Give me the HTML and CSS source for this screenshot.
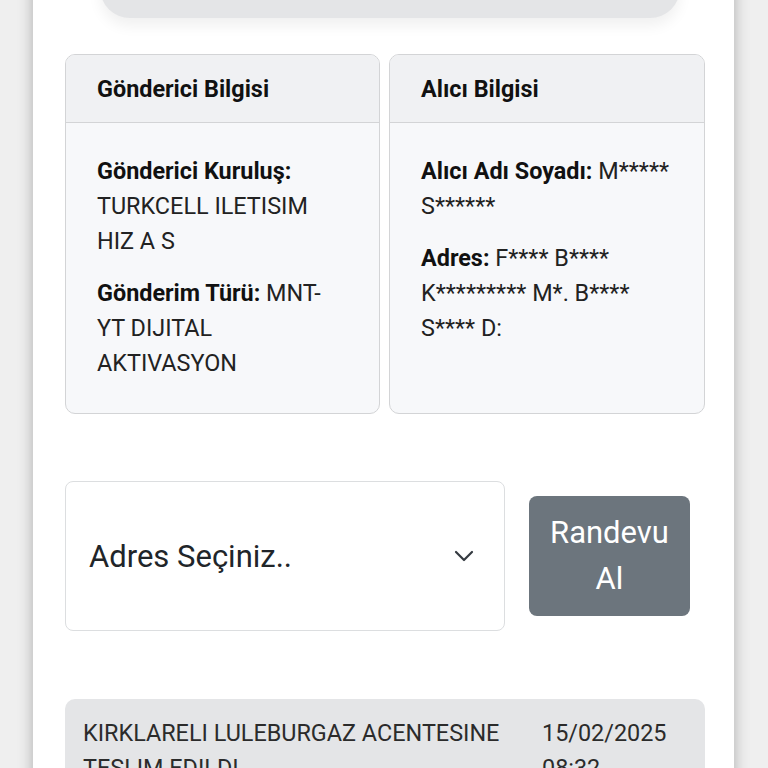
FILE: index.html
```html
<!DOCTYPE html>
<html lang="tr">
<head>
<meta charset="utf-8">
<title>Gönderi</title>
<link rel="stylesheet" href="styles.css">
</head>
<body>
<div class="panel">
  <div class="pill"></div>
  <div class="cards">
    <div class="card">
      <div class="card-head">Gönderici Bilgisi</div>
      <div class="card-body">
        <p><b>Gönderici Kuruluş:</b> TURKCELL ILETISIM HIZ A S</p>
        <p><b>Gönderim Türü:</b> MNT-YT DIJITAL AKTIVASYON</p>
      </div>
    </div>
    <div class="card">
      <div class="card-head">Alıcı Bilgisi</div>
      <div class="card-body">
        <p><b>Alıcı Adı Soyadı:</b> M***** S******</p>
        <p><b>Adres:</b> F**** B**** K********* M*. B**** S**** D:</p>
      </div>
    </div>
  </div>
  <div class="appt">
    <div class="select">
      <span>Adres Seçiniz..</span>
      <svg class="chev" width="20" height="12" viewBox="0 0 20 12"><path d="M2 2 L10 10 L18 2" fill="none" stroke="#343a40" stroke-width="2.2" stroke-linecap="round" stroke-linejoin="round"/></svg>
    </div>
    <div class="btn">Randevu Al</div>
  </div>
  <div class="history">
    <div class="hist-text">KIRKLARELI LULEBURGAZ ACENTESINE TESLIM EDILDI</div>
    <div class="hist-date">15/02/2025 08:32</div>
  </div>
</div>
</body>
</html>
```

FILE: styles.css
```css
html, body {
  margin: 0;
  padding: 0;
}
body {
  background: #efefef;
  font-family: Roboto, "Noto Sans", sans-serif;
  color: #212529;
  height: 768px;
  overflow: hidden;
}
.panel {
  margin-left: 33px;
  width: 701px;
  min-height: 900px;
  background: #ffffff;
  box-shadow: 0 0 14px rgba(0, 0, 0, 0.28);
  padding: 0 29px 0 32px;
  box-sizing: border-box;
}
.pill {
  margin: -42px 0 0 35px;
  width: 580px;
  height: 60px;
  background: #e4e5e7;
  border-radius: 40px;
  box-shadow: 0 8px 14px rgba(0, 0, 0, 0.06);
}
.cards {
  margin-top: 36px;
  display: grid;
  grid-template-columns: 315px 316px;
  gap: 9px;
}
.card {
  border: 1px solid #d3d4d6;
  border-radius: 10px;
  background: #f7f8fa;
  overflow: hidden;
  display: flex;
  flex-direction: column;
}
.card-head {
  background: #f0f1f3;
  border-bottom: 1px solid #d3d4d6;
  height: 67px;
  display: flex;
  align-items: center;
  padding-left: 31px;
  font-size: 23.4px;
  font-weight: 700;
  color: #111;
}
.card-body {
  padding: 14px 31px 32px 31px;
  font-size: 23.4px;
  line-height: 35px;
  color: #222;
}
.card-body p {
  margin: 17px 0 0;
}
.card-body b {
  color: #111;
}
.appt {
  margin-top: 67px;
  display: flex;
  align-items: center;
  gap: 24px;
}
.select {
  width: 440px;
  height: 150px;
  box-sizing: border-box;
  border: 1px solid #dcdee0;
  border-radius: 8px;
  display: flex;
  align-items: center;
  justify-content: space-between;
  padding: 0 30px 0 23px;
  font-size: 31px;
  color: #212529;
}
.chev {
  display: block;
}
.btn {
  width: 161px;
  height: 120px;
  box-sizing: border-box;
  background: #6c757d;
  color: #ffffff;
  border-radius: 8px;
  font-size: 31px;
  line-height: 46px;
  text-align: center;
  padding: 14px 16px;
}
.history {
  margin-top: 68px;
  background: #e4e5e7;
  border-radius: 10px;
  padding: 17px 18px;
  display: grid;
  grid-template-columns: 459px auto;
  font-size: 23.4px;
  line-height: 35px;
  color: #2b2b2b;
}
.hist-date {
  width: 130px;
}
```
